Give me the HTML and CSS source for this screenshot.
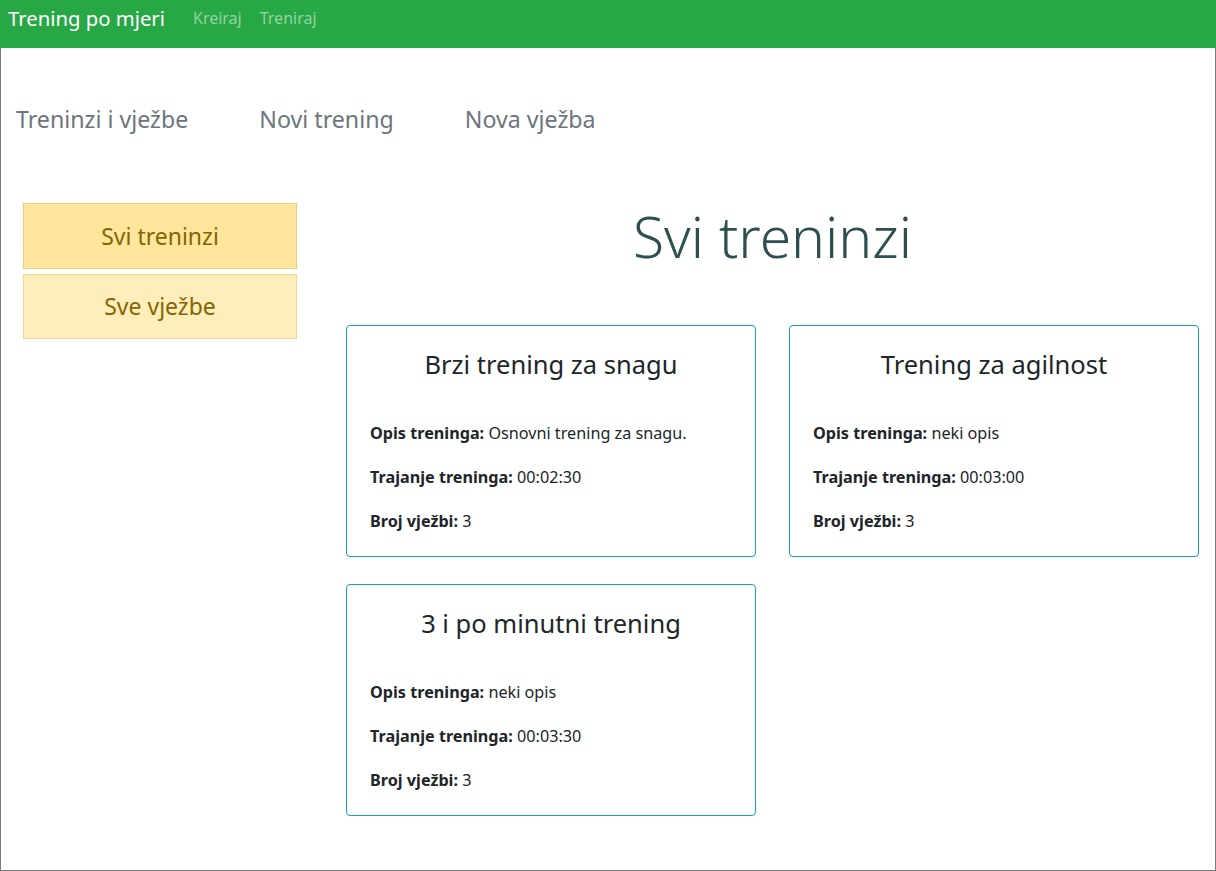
FILE: index.html
```html
<!DOCTYPE html>
<html lang="hr">
<head>
<meta charset="utf-8">
<title>Trening po mjeri</title>
<link rel="stylesheet" href="styles.css">
</head>
<body>
<nav class="navbar">
  <a class="brand" href="#">Trening po mjeri</a>
  <a class="nav-link" href="#">Kreiraj</a>
  <a class="nav-link" href="#">Treniraj</a>
</nav>
<div class="frame">
  <div class="tabs">
    <a class="tab" href="#">Treninzi i vježbe</a>
    <a class="tab" href="#">Novi trening</a>
    <a class="tab" href="#">Nova vježba</a>
  </div>
  <div class="content">
    <aside class="sidebar">
      <a class="side-btn active" href="#">Svi treninzi</a>
      <a class="side-btn" href="#">Sve vježbe</a>
    </aside>
    <main class="main">
      <h1 class="title">Svi treninzi</h1>
      <div class="cards">
        <div class="card">
          <h3 class="card-title">Brzi trening za snagu</h3>
          <p><b>Opis treninga:</b> Osnovni trening za snagu.</p>
          <p><b>Trajanje treninga:</b> 00:02:30</p>
          <p><b>Broj vježbi:</b> 3</p>
        </div>
        <div class="card">
          <h3 class="card-title">Trening za agilnost</h3>
          <p><b>Opis treninga:</b> neki opis</p>
          <p><b>Trajanje treninga:</b> 00:03:00</p>
          <p><b>Broj vježbi:</b> 3</p>
        </div>
        <div class="card">
          <h3 class="card-title">3 i po minutni trening</h3>
          <p><b>Opis treninga:</b> neki opis</p>
          <p><b>Trajanje treninga:</b> 00:03:30</p>
          <p><b>Broj vježbi:</b> 3</p>
        </div>
      </div>
    </main>
  </div>
</div>
</body>
</html>
```

FILE: styles.css
```css
* { box-sizing: border-box; }

html, body {
  margin: 0;
  padding: 0;
  background: #fff;
}

body {
  font-family: "Noto Sans", "Open Sans", sans-serif;
  color: #212529;
  font-size: 16px;
  line-height: 1.5;
}

a { text-decoration: none; }

.navbar {
  height: 48px;
  background: #28a745;
  display: flex;
  align-items: flex-start;
  padding: 3px 8px 0;
}

.brand {
  color: #fff;
  font-size: 20.3px;
  line-height: 30px;
  margin-right: 28px;
}

.nav-link {
  color: rgba(255, 255, 255, 0.5);
  font-size: 16px;
  line-height: 30px;
  margin-right: 18px;
}

.frame {
  height: 823px;
  border: 1px solid #7a7a7a;
  border-top: none;
}

.tabs {
  display: flex;
  gap: 71px;
  padding: 54px 0 0 15px;
  height: 155px;
}

.tab {
  color: #6c757d;
  font-size: 23.2px;
  line-height: 34px;
}

.content {
  display: flex;
  align-items: flex-start;
}

.sidebar {
  width: 296px;
  padding-left: 22px;
  display: flex;
  flex-direction: column;
  gap: 5px;
}

.side-btn {
  display: flex;
  align-items: center;
  justify-content: center;
  height: 65px;
  background: #ffeeba;
  border: 1px solid #efd998;
  color: #856404;
  font-size: 23px;
}

.side-btn.active {
  height: 66px;
  background: #ffe69c;
  border-color: #e9cf83;
}

.main {
  margin-left: 49px;
  width: 853px;
}

.title {
  margin: 0;
  text-align: center;
  font-weight: 300;
  font-size: 57px;
  line-height: 77px;
  color: #2f4f4f;
  margin-top: -5px;
}

.cards {
  display: grid;
  grid-template-columns: 410px 410px;
  column-gap: 33px;
  row-gap: 27px;
  margin-top: 50px;
}

.card {
  height: 232px;
  border: 1px solid #17a2b8;
  border-radius: 4px;
  padding: 21px 23px 0;
}

.card-title {
  margin: 0 0 40px;
  text-align: center;
  font-weight: 400;
  font-size: 25.5px;
  line-height: 34px;
}

.card p {
  margin: 0 0 20px;
  font-size: 16.2px;
  line-height: 24px;
}

.card b { font-weight: 700; }
```
